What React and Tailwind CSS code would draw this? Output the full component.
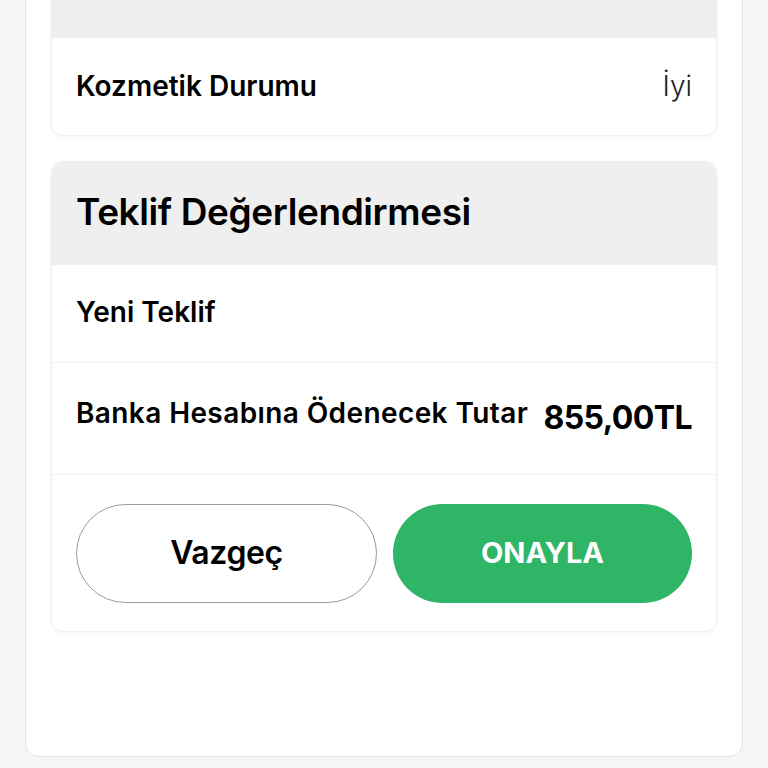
import React from 'react';

const font = { fontFamily: 'Inter, "Open Sans", sans-serif' };

export default function App() {
  return (
    <div className="min-h-[768px] w-full bg-[#f5f5f5]" style={font}>
      <div className="mx-[25px] w-[718px] bg-white border border-t-0 border-[#e4e4e4] rounded-b-[14px] px-[25px] pb-[124px]">
        {/* Cihaz durumu kartı (üstü kesik) */}
        <div className="rounded-b-[12px] border border-t-0 border-[#efefef] shadow-[0_2px_4px_rgba(0,0,0,0.04)] overflow-hidden">
          <div className="h-[38px] bg-[#eeeeee]" />
          <div className="h-[97px] flex items-center justify-between px-[24px]">
            <span className="text-[28px] font-semibold tracking-[0px] text-black -mt-[2px]">Kozmetik Durumu</span>
            <span className="text-[28px] font-light text-[#222] -mt-[2px]">İyi</span>
          </div>
        </div>

        {/* Teklif kartı */}
        <div className="mt-[25px] rounded-[12px] border border-[#efefef] shadow-[0_2px_4px_rgba(0,0,0,0.04)] overflow-hidden">
          <div className="h-[103px] bg-[#efefef] flex items-center px-[24px]">
            <h2 className="text-[37px] font-semibold tracking-[-0.4px] text-black -mt-[4px]">Teklif Değerlendirmesi</h2>
          </div>
          <div className="h-[98px] flex items-center px-[24px] border-b border-[#efefef]">
            <span className="text-[28px] font-semibold tracking-[0px] text-black -mt-[4px]">Yeni Teklif</span>
          </div>
          <div className="h-[112px] flex items-center justify-between px-[24px] border-b border-[#efefef]">
            <span className="text-[28px] font-semibold tracking-[0.4px] text-black -mt-[12px]">Banka Hesabına Ödenecek Tutar</span>
            <span className="text-[32px] font-bold tracking-[-0.6px] text-black -mt-[2px]">855,00TL</span>
          </div>
          <div className="h-[156px] flex items-center gap-[16px] px-[24px]">
            <button className="flex-1 h-[99px] rounded-full border border-[#9a9a9a] bg-white text-[32px] font-semibold tracking-[-0.4px] text-black">
              Vazgeç
            </button>
            <button className="flex-1 h-[99px] rounded-full bg-[#2fb566] text-[29px] font-bold text-white">
              ONAYLA
            </button>
          </div>
        </div>
      </div>
    </div>
  );
}
